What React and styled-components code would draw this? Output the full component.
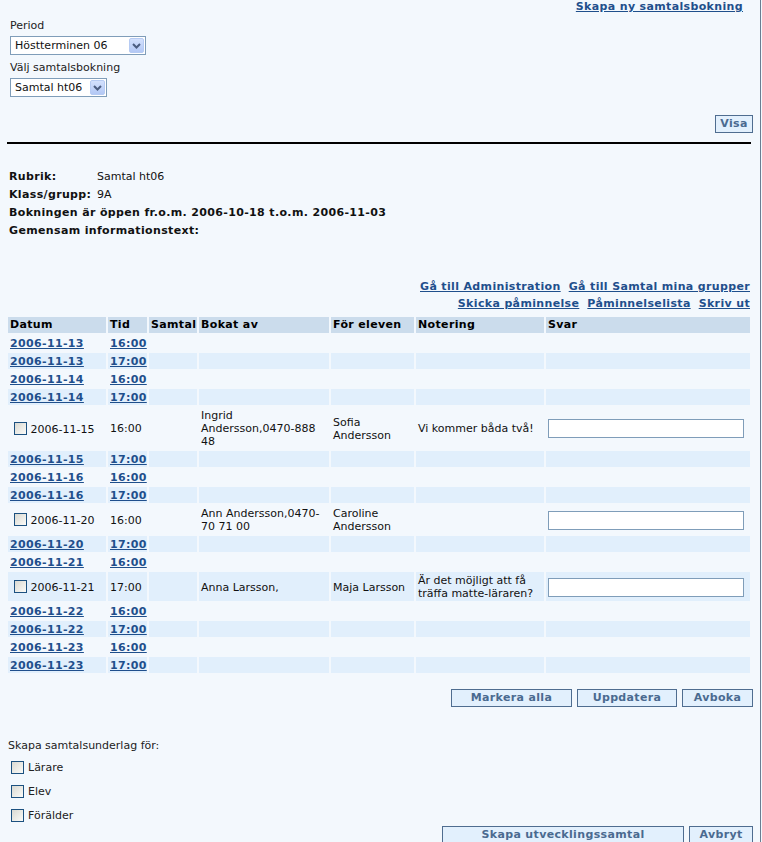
import React from 'react';
import styled, { createGlobalStyle } from 'styled-components';

const GlobalStyle = createGlobalStyle`
  html, body {
    margin: 0;
    padding: 0;
    background: #f3f8fd;
  }
  body {
    font-family: "DejaVu Sans", Verdana, sans-serif;
    font-size: 11px;
    line-height: 13px;
    color: #111;
  }
`;

const slots = [
  { date: '2006-11-13', time: '16:00' },
  { date: '2006-11-13', time: '17:00' },
  { date: '2006-11-14', time: '16:00' },
  { date: '2006-11-14', time: '17:00' },
  { date: '2006-11-15', time: '16:00', booked: true, by: 'Ingrid Andersson,0470-888 48', pupil: 'Sofia Andersson', note: 'Vi kommer båda två!' },
  { date: '2006-11-15', time: '17:00' },
  { date: '2006-11-16', time: '16:00' },
  { date: '2006-11-16', time: '17:00' },
  { date: '2006-11-20', time: '16:00', booked: true, by: 'Ann Andersson,0470-\u200b70 71 00', pupil: 'Caroline Andersson', note: '' },
  { date: '2006-11-20', time: '17:00' },
  { date: '2006-11-21', time: '16:00' },
  { date: '2006-11-21', time: '17:00', booked: true, by: 'Anna Larsson,', pupil: 'Maja Larsson', note: 'Är det möjligt att få träffa matte-läraren?' },
  { date: '2006-11-22', time: '16:00' },
  { date: '2006-11-22', time: '17:00' },
  { date: '2006-11-23', time: '16:00' },
  { date: '2006-11-23', time: '17:00' },
];

const columns = [
  { label: 'Datum', width: 98 },
  { label: 'Tid', width: 39 },
  { label: 'Samtal', width: 48 },
  { label: 'Bokat av', width: 130 },
  { label: 'För eleven', width: 83 },
  { label: 'Notering', width: 128 },
  { label: 'Svar', width: 204 },
];

function Chevron() {
  return (
    <svg width="9" height="6" viewBox="0 0 9 6">
      <path d="M1 1 L4.5 4.5 L8 1" stroke="#4b5d80" strokeWidth="2" fill="none" />
    </svg>
  );
}

function Select({ value, width }) {
  return (
    <SelectBox $width={width}>
      <span>{value}</span>
      <SelectArrow><Chevron /></SelectArrow>
    </SelectBox>
  );
}

export default function App() {
  return (
    <Page>
      <GlobalStyle />
      <TopBar>
        <Filters>
          <FieldLabel $gap={4}>Period</FieldLabel>
          <Select value="Höstterminen 06" width={136} />
          <FieldLabel $gap={4} $top={6}>Välj samtalsbokning</FieldLabel>
          <Select value="Samtal ht06" width={97} />
        </Filters>
        <Link href="#">Skapa ny samtalsbokning</Link>
      </TopBar>

      <ButtonRow $top={18}>
        <Button $width={38}>Visa</Button>
      </ButtonRow>

      <Rule />

      <Info>
        <InfoLabel>Rubrik:</InfoLabel><span>Samtal ht06</span>
        <InfoLabel>Klass/grupp:</InfoLabel><span>9A</span>
        <InfoWide>Bokningen är öppen fr.o.m. 2006-10-18 t.o.m. 2006-11-03</InfoWide>
        <InfoWide>Gemensam informationstext:</InfoWide>
      </Info>

      <LinkBlock>
        <LinkLine>
          <Link href="#">Gå till Administration</Link>
          <Link href="#">Gå till Samtal mina grupper</Link>
        </LinkLine>
        <LinkLine>
          <Link href="#">Skicka påminnelse</Link>
          <Link href="#">Påminnelselista</Link>
          <Link href="#">Skriv ut</Link>
        </LinkLine>
      </LinkBlock>

      <Table>
        <colgroup>
          {columns.map((c) => <col key={c.label} style={{ width: c.width }} />)}
        </colgroup>
        <thead>
          <tr>
            {columns.map((c) => <Th key={c.label}>{c.label}</Th>)}
          </tr>
        </thead>
        <tbody>
          {slots.map((s, i) => (
            <Row key={i} $alt={i % 2 === 1}>
              {s.booked ? (
                <>
                  <Td><Check $inline /> {s.date}</Td>
                  <Td>{s.time}</Td>
                  <Td />
                  <Td>{s.by}</Td>
                  <Td>{s.pupil}</Td>
                  <Td>{s.note}</Td>
                  <Td><Answer /></Td>
                </>
              ) : (
                <>
                  <Td><Link href="#">{s.date}</Link></Td>
                  <Td><Link href="#">{s.time}</Link></Td>
                  <Td /><Td /><Td /><Td /><Td />
                </>
              )}
            </Row>
          ))}
        </tbody>
      </Table>

      <ButtonRow $top={14}>
        <Button $width={121}>Markera alla</Button>
        <Button $width={100}>Uppdatera</Button>
        <Button $width={71}>Avboka</Button>
      </ButtonRow>

      <Underlag>
        <div>Skapa samtalsunderlag för:</div>
        <CheckList>
          {['Lärare', 'Elev', 'Förälder'].map((t) => (
            <CheckRow key={t}>
              <Check />
              <span>{t}</span>
            </CheckRow>
          ))}
        </CheckList>
      </Underlag>

      <ButtonRow $top={1}>
        <Button $width={242}>Skapa utvecklingssamtal</Button>
        <Button $width={64}>Avbryt</Button>
      </ButtonRow>
    </Page>
  );
}

const Page = styled.div`
  width: 760px;
  min-height: 880px;
  border-right: 1px solid #6a7d92;
  background: #f3f8fd;
`;

const TopBar = styled.div`
  display: flex;
  justify-content: space-between;
  align-items: flex-start;
  padding: 0 17px 0 10px;
`;

const Filters = styled.div`
  display: flex;
  flex-direction: column;
  align-items: flex-start;
  padding-top: 19px;
`;

const FieldLabel = styled.div`
  margin-top: ${(p) => p.$top || 0}px;
  margin-bottom: ${(p) => p.$gap}px;
  color: #222;
`;

const SelectBox = styled.div`
  display: flex;
  align-items: center;
  justify-content: space-between;
  box-sizing: border-box;
  width: ${(p) => p.$width}px;
  height: 19px;
  padding: 0 1px 0 4px;
  border: 1px solid #7f9db9;
  background: #fff;
  color: #111;
`;

const SelectArrow = styled.span`
  display: flex;
  align-items: center;
  justify-content: center;
  box-sizing: border-box;
  width: 15px;
  height: 15px;
  border: 1px solid #b6cbf3;
  border-radius: 2px;
  background: linear-gradient(#d3e1fd, #b3c8f5);
`;

const Link = styled.a`
  color: #1f4f8c;
  font-weight: bold;
  letter-spacing: 0.35px;
  text-decoration: underline;
  white-space: nowrap;
`;

const ButtonRow = styled.div`
  display: flex;
  justify-content: flex-end;
  gap: 5px;
  margin-top: ${(p) => p.$top}px;
  padding-right: 7px;
`;

const Button = styled.button`
  box-sizing: border-box;
  width: ${(p) => p.$width}px;
  height: 18px;
  padding: 0;
  border: 1px solid #4f6d90;
  background: #e2f0fd;
  color: #4a6a90;
  font-family: "DejaVu Sans", Verdana, sans-serif;
  font-size: 11px;
  font-weight: bold;
  letter-spacing: 0.35px;
  line-height: 14px;
`;

const Rule = styled.div`
  height: 2px;
  margin: 9px 9px 0 7px;
  background: #000;
`;

const Info = styled.div`
  display: grid;
  grid-template-columns: 88px auto;
  grid-auto-rows: 18px;
  align-items: center;
  margin-top: 23px;
  padding-left: 9px;
`;

const InfoLabel = styled.span`
  font-weight: bold;
  letter-spacing: 0.35px;
`;

const InfoWide = styled.span`
  grid-column: 1 / -1;
  font-weight: bold;
  letter-spacing: 0.35px;
`;

const LinkBlock = styled.div`
  display: flex;
  flex-direction: column;
  align-items: flex-end;
  margin-top: 39px;
  padding-right: 10px;
`;

const LinkLine = styled.div`
  display: flex;
  gap: 8px;
  height: 17px;
  align-items: center;
`;

const Table = styled.table`
  table-layout: fixed;
  width: 746px;
  margin: 3px 0 0 6px;
  border-collapse: separate;
  border-spacing: 2px;
`;

const Th = styled.th`
  padding: 1px 2px 2px;
  background: #cbdcec;
  text-align: left;
  font-weight: bold;
  letter-spacing: 0.35px;
  color: #000;
  line-height: 13px;
`;

const Row = styled.tr`
  background: ${(p) => (p.$alt ? '#e1effc' : 'transparent')};
`;

const Td = styled.td`
  padding: 2px 2px 1px;
  line-height: 13px;
  vertical-align: middle;
  white-space: normal;
`;

const Check = styled.input.attrs({ type: 'checkbox' })`
  appearance: none;
  box-sizing: border-box;
  width: 13px;
  height: 13px;
  margin: ${(p) => (p.$inline ? '0 0 0 4px' : '0')};
  border: 1px solid #1c5180;
  background: linear-gradient(135deg, #d9d9d2, #fbfbf8);
  vertical-align: -2px;
  flex-shrink: 0;
`;

const Answer = styled.input.attrs({ type: 'text' })`
  box-sizing: border-box;
  display: block;
  width: 196px;
  height: 19px;
  margin: 0;
  border: 1px solid #7f9db9;
  background: #fff;
`;

const Underlag = styled.div`
  margin-top: 32px;
  padding-left: 8px;
  color: #222;
`;

const CheckList = styled.div`
  display: flex;
  flex-direction: column;
  gap: 4px;
  margin-top: 5px;
  padding-left: 3px;
`;

const CheckRow = styled.label`
  display: flex;
  align-items: center;
  gap: 4px;
  height: 20px;
`;
